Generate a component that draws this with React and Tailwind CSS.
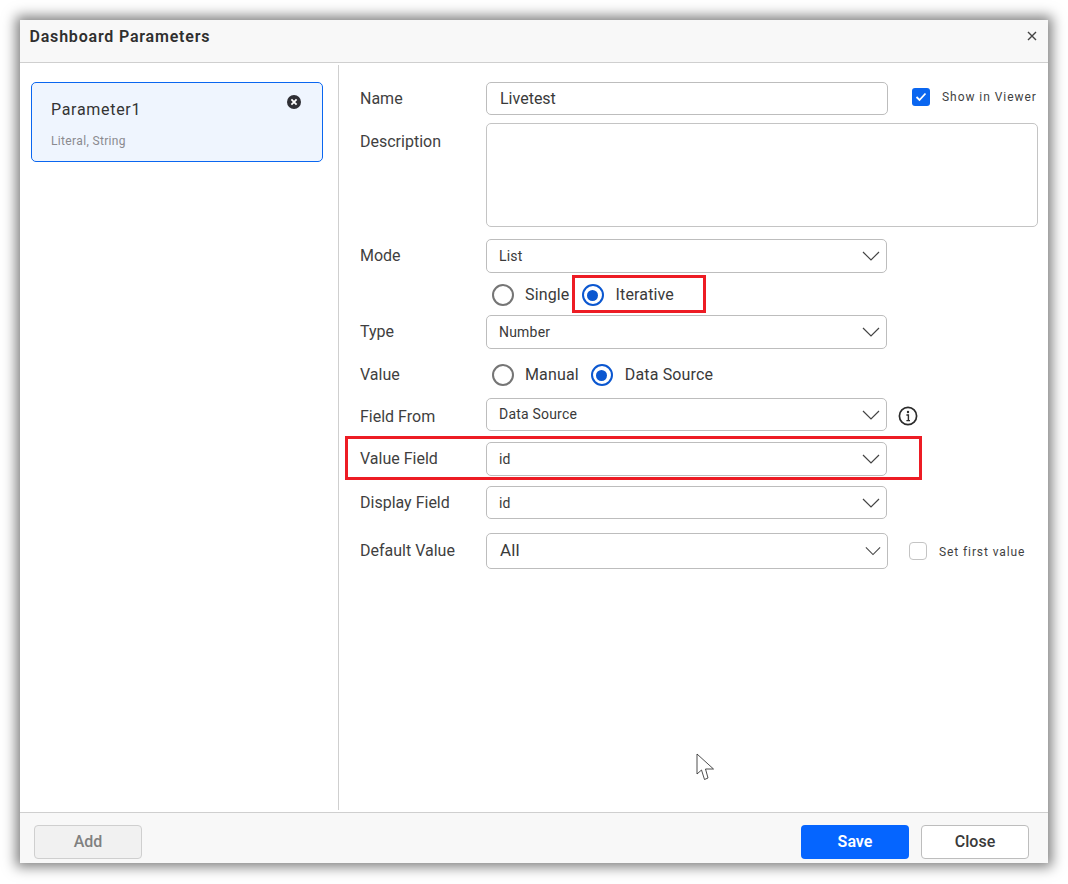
import React from "react";

const Chevron = ({ small }) => (
  <svg width={small ? 16 : 18} height="10" viewBox="0 0 18 10" fill="none" stroke="#444" strokeWidth="1.2" className="shrink-0">
    <path d="M1 1 L9 9 L17 1" />
  </svg>
);

function Select({ value, big, wide, className = "", textClass = "" }) {
  return (
    <div className={`flex items-center justify-between rounded-[5px] border border-[#bdbdbd] bg-white pr-[6px] text-[#3a3a3a] ${wide ? "w-[402px] pl-[13px]" : "w-[401px] pl-[12px]"} ${big ? "text-[17px]" : "text-[14px]"} ${className}`}>
      <span className={`tracking-[0.2px] ${textClass}`}>{value}</span>
      <Chevron small={big} />
    </div>
  );
}

function Radio({ label, checked, gap = "ml-[11px]" }) {
  return (
    <div className="flex items-center">
      <span className={`flex h-[22px] w-[22px] items-center justify-center rounded-full border-2 ${checked ? "border-[#0b57d0]" : "border-[#757575]"}`}>
        {checked && <span className="h-[11px] w-[11px] rounded-full bg-[#0b57d0]" />}
      </span>
      <span className={`${gap} text-[16px] tracking-[0.15px] text-[#3a3a3a]`}>{label}</span>
    </div>
  );
}

function Row({ label, children, className = "", labelClass = "" }) {
  return (
    <div className={`flex items-center ${className}`}>
      <div className={`w-[126px] shrink-0 text-[16px] text-[#3f3f3f] ${labelClass}`}>{label}</div>
      {children}
    </div>
  );
}

export default function App() {
  return (
    <div className="h-[884px] w-[1068px] overflow-hidden bg-white pl-[20px] pt-[20px] font-['Roboto',sans-serif]">
      <div className="relative flex h-[843px] w-[1028px] flex-col bg-white shadow-[0_0_12px_4px_rgba(0,0,0,0.5)]">
        <header className="flex h-[43px] shrink-0 items-start justify-between border-b border-[#cfcfcf] bg-[#f8f8f8] pl-[9.5px] pr-[11px] pt-[6px]">
          <h1 className="text-[16px] font-semibold leading-[22px] tracking-[0.8px] text-[#2f2f2f]">Dashboard Parameters</h1>
          <svg width="10" height="10" viewBox="0 0 10 10" stroke="#444" strokeWidth="1.4" className="mt-[5px]">
            <path d="M1 1 L9 9 M9 1 L1 9" />
          </svg>
        </header>

        <main className="flex min-h-0 flex-1 pt-[2px]">
          <aside className="h-[745px] w-[319px] shrink-0 border-r border-[#cfcfcf] pl-[11px] pt-[17px]">
            <div className="relative h-[80px] w-[292px] rounded-[5px] border border-[#0a66f0] bg-[#eff5fe] pl-[19px] pt-[16px]">
              <div className="text-[16px] leading-[22px] tracking-[0.7px] text-[#333]">Parameter1</div>
              <div className="mt-[11px] text-[12px] leading-[18px] tracking-[0.35px] text-[#8a8a8f]">Literal, String</div>
              <svg width="14" height="14" viewBox="0 0 14 14" className="absolute right-[21px] top-[12px]">
                <circle cx="7" cy="7" r="7" fill="#2f2f35" />
                <path d="M4.4 4.4 L9.6 9.6 M9.6 4.4 L4.4 9.6" stroke="#fff" strokeWidth="1.8" />
              </svg>
            </div>
          </aside>

          <section className="min-w-0 flex-1 pl-[21px] pt-[17px]">
            <Row label="Name" className="h-[33px]">
              <div className="flex h-[33px] w-[402px] items-center rounded-[5px] border border-[#bdbdbd] pl-[13px] text-[16px] text-[#3a3a3a]">Livetest</div>
              <div className="ml-[24px] flex items-center pb-[4px]">
                <span className="flex h-[18px] w-[18px] items-center justify-center rounded-[3px] bg-[#0a66f0]">
                  <svg width="12" height="10" viewBox="0 0 12 10" fill="none" stroke="#fff" strokeWidth="1.8"><path d="M1.5 5 L4.5 8 L10.5 1.5" /></svg>
                </span>
                <span className="ml-[12px] text-[12px] tracking-[0.95px] text-[#3f3f3f]">Show in Viewer</span>
              </div>
            </Row>

            <Row label="Description" className="mt-[8px] !items-start" labelClass="pt-[7px]">
              <div className="h-[104px] w-[552px] rounded-[5px] border border-[#c4c4c4]" />
            </Row>

            <Row label="Mode" className="mt-[12px]">
              <Select value="List" className="h-[34px]" />
            </Row>

            <div className="mt-[5px] flex h-[34px] items-center pl-[132px]">
              <Radio label="Single" />
              <div className="ml-[12px]"><Radio label="Iterative" checked gap="ml-[12px]" /></div>
            </div>

            <Row label="Type" className="mt-[3px]">
              <Select value="Number" className="h-[34px]" />
            </Row>

            <div className="mt-[9px] flex h-[34px] items-center">
              <div className="w-[132px] shrink-0 text-[16px] text-[#3f3f3f]">Value</div>
              <Radio label="Manual" />
              <div className="ml-[12px]"><Radio label="Data Source" checked gap="ml-[12px]" /></div>
            </div>

            <Row label="Field From" className="mt-[6px]" labelClass="pt-[4px]">
              <Select value="Data Source" className="h-[33px]" />
              <svg width="20" height="20" viewBox="0 0 20 20" fill="none" className="ml-[11px] mt-[2px]">
                <circle cx="10" cy="10" r="8.6" stroke="#2b2b2b" strokeWidth="1.7" />
                <circle cx="10" cy="6" r="1.2" fill="#2b2b2b" />
                <path d="M8.4 9 H10.4 V14.2 M8.4 14.6 H12" stroke="#2b2b2b" strokeWidth="1.4" />
              </svg>
            </Row>

            <Row label="Value Field" className="mt-[11px]">
              <Select value="id" className="h-[34px]" textClass="pt-[1px]" />
            </Row>

            <Row label="Display Field" className="mt-[10px]">
              <Select value="id" className="h-[33px]" textClass="pt-[2px]" />
            </Row>

            <Row label="Default Value" className="mt-[14px]">
              <Select value="All" big wide className="h-[36px] border-[#a8a8a8]" />
              <span className="ml-[21px] h-[18px] w-[18px] rounded-[4px] border border-[#c4c4c4]" />
              <span className="ml-[12px] pt-[1px] text-[12px] tracking-[0.9px] text-[#3f3f3f]">Set first value</span>
            </Row>
          </section>
        </main>

        <footer className="flex h-[51px] shrink-0 items-start justify-between border-t border-[#cfcfcf] bg-[#f8f8f8] pl-[14px] pr-[19px] pt-[12px]">
          <button className="h-[34px] w-[108px] rounded-[4px] border border-[#cfcfcf] bg-[#f1f1f1] text-[16px] font-medium text-[#808080]">Add</button>
          <div className="flex gap-[12px]">
            <button className="h-[34px] w-[108px] rounded-[4px] bg-[#0565ff] text-[16px] font-semibold text-white">Save</button>
            <button className="h-[34px] w-[108px] rounded-[4px] border border-[#bdbdbd] bg-white text-[16px] font-medium text-[#3a3a3a]">Close</button>
          </div>
        </footer>

        <div className="absolute left-[552px] top-[255px] h-[38px] w-[134px] border-[3px] border-[#ed1c24]" />
        <div className="absolute left-[325px] top-[416px] h-[44px] w-[577px] border-[3px] border-[#ed1c24]" />

        <svg width="20" height="28" viewBox="0 0 20 28" fill="#fff" stroke="#222" strokeWidth="0.8" className="absolute left-[676px] top-[733px]">
          <path d="M1 1 V21 L5.5 17 L8.5 26.5 L12 25 L9.5 16 L17.5 16 Z" />
        </svg>
      </div>
    </div>
  );
}
